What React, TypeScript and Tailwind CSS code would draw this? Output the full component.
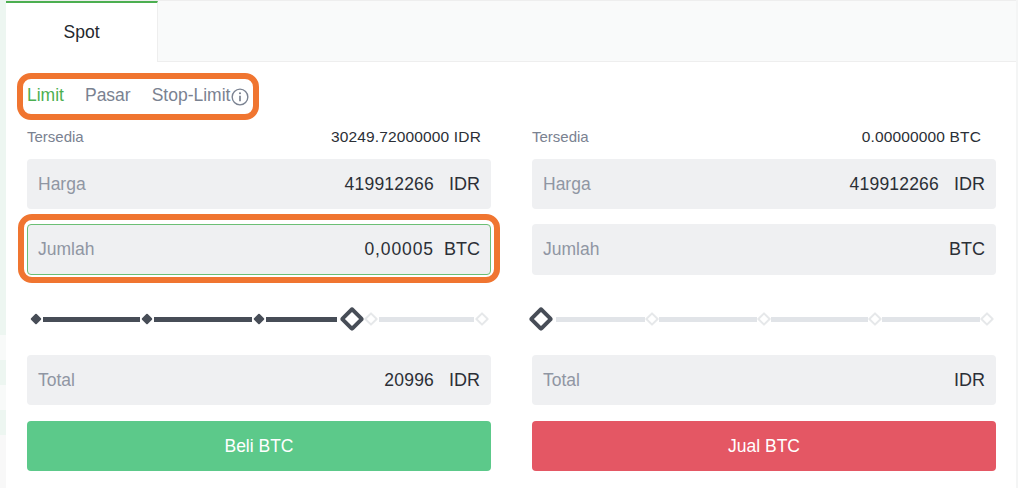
import type { ReactNode } from "react";

const FONT = "font-['Liberation_Sans',Arial,sans-serif]";

function Field({ label, value, unit, focused, tall, wide }: { label: string; value?: string; unit: string; focused?: boolean; tall?: boolean; wide?: boolean }) {
  return (
    <div className={`flex items-center rounded-[4px] bg-[#eff0f2] text-[17.5px] ${tall ? "h-[51px]" : "h-[50px]"} ${focused ? "border border-[#6bbf75] px-[10px]" : "px-[11px]"}`}>
      <span className="text-[#8f96a3]">{label}</span>
      <span className={`ml-auto text-[#2b2f36] ${wide ? "tracking-[0.9px]" : "tracking-[0.2px]"}`}>{value}</span>
      <span className="w-[46px] text-right text-[18px] text-[#2b2f36]">{unit}</span>
    </div>
  );
}

function Thumb({ className = "" }: { className?: string }) {
  return <div className={`h-[18px] w-[18px] shrink-0 rotate-45 rounded-[3px] border-[4px] border-[#474d57] bg-white ${className}`} />;
}

function Dot() {
  return <div className="h-[8px] w-[8px] shrink-0 rotate-45 rounded-[1px] bg-[#474d57]" />;
}

function Empty() {
  return <div className="h-[10px] w-[10px] shrink-0 rotate-45 rounded-[1px] border-[2px] border-[#e6e8ea] bg-white" />;
}

function BuySlider() {
  return (
    <div className="flex h-[30px] items-center gap-[3px] pl-[5px] pr-[4px]">
      <Dot />
      <div className="h-[5px] w-[97px] shrink-0 bg-[#474d57]" />
      <Dot />
      <div className="h-[5px] w-[98px] shrink-0 bg-[#474d57]" />
      <Dot />
      <div className="h-[5px] w-[71px] shrink-0 bg-[#474d57]" />
      <Thumb className="ml-[3px]" />
      <div className="ml-[2px]"><Empty /></div>
      <div className="h-[5px] flex-1 bg-[#e1e4e8]" />
      <Empty />
    </div>
  );
}

function SellSlider() {
  return (
    <div className="flex h-[30px] items-center gap-[2px] pr-[4px]">
      <Thumb className="mr-[4px]" />
      <div className="h-[5px] w-[89px] shrink-0 bg-[#e1e4e8]" />
      <Empty />
      <div className="h-[5px] w-[98px] shrink-0 bg-[#e1e4e8]" />
      <Empty />
      <div className="h-[5px] w-[97px] shrink-0 bg-[#e1e4e8]" />
      <Empty />
      <div className="h-[5px] flex-1 bg-[#e1e4e8]" />
      <Empty />
    </div>
  );
}

function Side({ avail, price, qty, qtyUnit, total, action, buy, slider }: {
  avail: string; price: string; qty?: string; qtyUnit: string; total?: string; action: string; buy?: boolean; slider: ReactNode;
}) {
  return (
    <div className="flex w-[464px] flex-col">
      <div className={`flex h-[22px] items-center justify-between ${buy ? "pr-[10px]" : "pr-[15px]"}`}>
        <span className="text-[15px] text-[#7a8291]">Tersedia</span>
        <span className="text-[15.5px] tracking-[0.15px] text-[#2b2f36]">{avail}</span>
      </div>
      <div className="mt-[11px]"><Field label="Harga" value={price} unit="IDR" /></div>
      <div className="mt-[15px]"><Field label="Jumlah" value={qty} unit={qtyUnit} focused={buy} tall wide /></div>
      <div className="mt-[29px]">{slider}</div>
      <div className="mt-[21px]"><Field label="Total" value={total} unit="IDR" /></div>
      <button className={`mt-[16px] h-[50px] rounded-[4px] text-[17.5px] text-white ${buy ? "bg-[#5cc98a]" : "bg-[#e45764]"}`}>{action}</button>
    </div>
  );
}

export default function App() {
  return (
    <div className={`${FONT} relative flex h-[494px] w-[1024px] overflow-hidden bg-white`}>
      <div className="flex h-[488px] w-[6px] shrink-0 flex-col">
        <div className="h-[335px] bg-[#edf6f1]" />
        <div className="h-[25px] bg-[#f8faf9]" />
        <div className="h-[25px] bg-[#edf6f1]" />
        <div className="h-[25px] bg-[#f8faf9]" />
        <div className="h-[25px] bg-[#edf6f1]" />
        <div className="h-[53px] bg-[#f8f8f8]" />
      </div>
      <div className="flex w-[1010px] shrink-0 flex-col">
        <div className="flex h-[62px] border-t border-[#eeeeee] bg-[#f9fafa]">
          <div className="flex w-[152px] items-center justify-center border-t-[2px] border-r border-t-[#4caf50] border-r-[#eeeeee] bg-white text-[17.5px] text-[#24282e]">Spot</div>
          <div className="flex-1 border-b border-[#eeeeee]" />
        </div>
        <div className="relative flex h-[55px] items-center pl-[21px] pt-[12px] text-[17.5px] text-[#7a8291]">
          <span className="text-[#4caf50]">Limit</span>
          <span className="ml-[21px]">Pasar</span>
          <span className="ml-[21px]">Stop-Limit</span>
          <svg className="ml-[1px] mt-[2px] h-[18px] w-[18px]" viewBox="0 0 17 17" fill="none" stroke="#7a8291" strokeWidth="1.3">
            <circle cx="8.5" cy="8.5" r="7.4" />
            <path d="M8.5 7.4v5" strokeWidth="1.6" />
            <circle cx="8.5" cy="5" r="1" fill="#7a8291" stroke="none" />
          </svg>
          <div className="absolute left-[11px] top-[11px] h-[47px] w-[242px] rounded-[14px] border-[6px] border-[#f07530]" />
        </div>
        <div className="flex pl-[21px] pt-[9px]">
          <Side avail="30249.72000000 IDR" price="419912266" qty="0,00005" qtyUnit="BTC" total="20996" action="Beli BTC" buy slider={<BuySlider />} />
          <div className="w-[41px] shrink-0" />
          <Side avail="0.00000000 BTC" price="419912266" qtyUnit="BTC" action="Jual BTC" slider={<SellSlider />} />
        </div>
      </div>
      <div className="h-[488px] w-[2px] shrink-0 bg-[#f4f5f5]" />
      <div className="absolute left-[18px] top-[214px] h-[69px] w-[482px] rounded-[14px] border-[6px] border-[#f07530]" />
    </div>
  );
}
